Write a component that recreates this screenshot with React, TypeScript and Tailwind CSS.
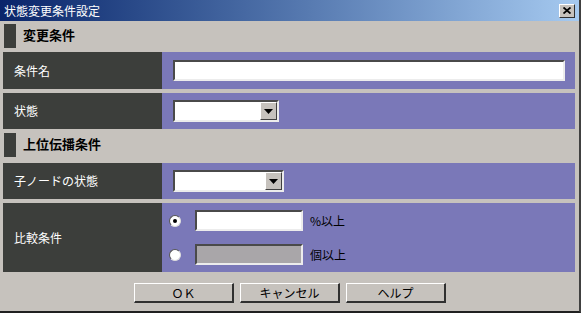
import React from "react";

const font = { fontFamily: '"Noto Sans CJK JP", "Noto Sans", sans-serif' };

function Sunken({ className = "", children }: { className?: string; children?: React.ReactNode }) {
  return (
    <div className={`border-t-2 border-l-2 border-b-2 border-r-2 border-t-[#4a4a4a] border-l-[#4a4a4a] border-b-[#ececec] border-r-[#ececec] ${className}`}>
      {children}
    </div>
  );
}

function Select({ w }: { w: string }) {
  return (
    <Sunken className={`${w} h-[22px] bg-white flex justify-end`}>
      <div className="w-[17px] h-full bg-[#c6c2bd] border-t border-l border-white border-r border-b border-r-[#404040] border-b-[#404040] flex items-center justify-center">
        <svg width="9" height="5" viewBox="0 0 9 5"><path d="M0 0H9L4.5 5Z" fill="#000" /></svg>
      </div>
    </Sunken>
  );
}

function Radio({ checked }: { checked?: boolean }) {
  return (
    <div className="w-[12px] h-[12px] rounded-full bg-white border border-t-[#555] border-l-[#555] border-b-[#ddd] border-r-[#ddd] flex items-center justify-center">
      {checked && <div className="w-[4px] h-[4px] rounded-full bg-black" />}
    </div>
  );
}

function Header({ text, h }: { text: string; h: string }) {
  return (
    <div className={`${h} flex items-center`}>
      <div className="ml-[1px] w-[12px] h-[24px] bg-[#3c3e3b] mt-[2px]" />
      <div className="ml-[7px] text-[13px] font-bold text-black" style={font}>{text}</div>
    </div>
  );
}

function Row({ label, h, children }: { label: string; h: string; children: React.ReactNode }) {
  return (
    <div className={`flex ${h}`}>
      <div className="w-[159px] bg-[#3c3e3b] flex items-center pl-[11px] text-[12px] text-white" style={font}>{label}</div>
      <div className="flex-1 bg-[#7a78b8] flex items-center pl-[11px]">{children}</div>
    </div>
  );
}

function Btn({ text }: { text: string }) {
  return (
    <div className="w-[100px] h-[20px] bg-[#c6c2bd] border-t border-l border-white border-r-2 border-b-2 border-r-[#303030] border-b-[#303030] flex items-center justify-center text-[12px] text-black" style={font}>
      {text}
    </div>
  );
}

export default function App() {
  return (
    <div className="w-[581px] h-[313px] bg-[#c6c2bd] border-r-2 border-b-2 border-r-[#404040] border-b-[#202020] flex flex-col overflow-hidden">
      <div className="h-[21px] flex items-center justify-between bg-gradient-to-r from-[#0a246a] to-[#a6caf0] pl-[4px] pr-[4px]">
        <span className="text-[12px] text-white" style={font}>状態変更条件設定</span>
        <div className="w-[16px] h-[14px] bg-[#c6c2bd] border-t border-l border-white border-r border-b border-r-[#303030] border-b-[#303030] flex items-center justify-center">
          <svg width="8" height="7" viewBox="0 0 8 7"><path d="M0.5 0.5L7.5 6.5M7.5 0.5L0.5 6.5" stroke="#000" strokeWidth="1.8" /></svg>
        </div>
      </div>
      <div className="pl-[3px] pr-[4px] flex flex-col">
        <Header text="変更条件" h="h-[28px]" />
        <div className="h-[3px]" />
        <Row label="条件名" h="h-[37px]">
          <Sunken className="w-[392px] h-[21px] bg-white" />
        </Row>
        <div className="h-[4px]" />
        <Row label="状態" h="h-[36px]">
          <Select w="w-[106px]" />
        </Row>
        <Header text="上位伝播条件" h="h-[30px]" />
        <div className="h-[4px]" />
        <Row label="子ノードの状態" h="h-[36px]">
          <Select w="w-[111px]" />
        </Row>
        <div className="h-[4px]" />
        <Row label="比較条件" h="h-[69px]">
          <div className="flex flex-col gap-[13px] -ml-[4px]">
            <div className="flex items-center">
              <Radio checked />
              <Sunken className="ml-[14px] w-[108px] h-[21px] bg-white" />
              <span className="ml-[7px] text-[12px] text-black" style={font}>%以上</span>
            </div>
            <div className="flex items-center">
              <Radio />
              <Sunken className="ml-[14px] w-[108px] h-[21px] bg-[#a9a6a9]" />
              <span className="ml-[7px] text-[12px] text-black" style={font}>個以上</span>
            </div>
          </div>
        </Row>
      </div>
      <div className="flex justify-center gap-[6px] mt-[11px] pl-[1px]">
        <Btn text="ＯＫ" />
        <Btn text="キャンセル" />
        <Btn text="ヘルプ" />
      </div>
    </div>
  );
}
